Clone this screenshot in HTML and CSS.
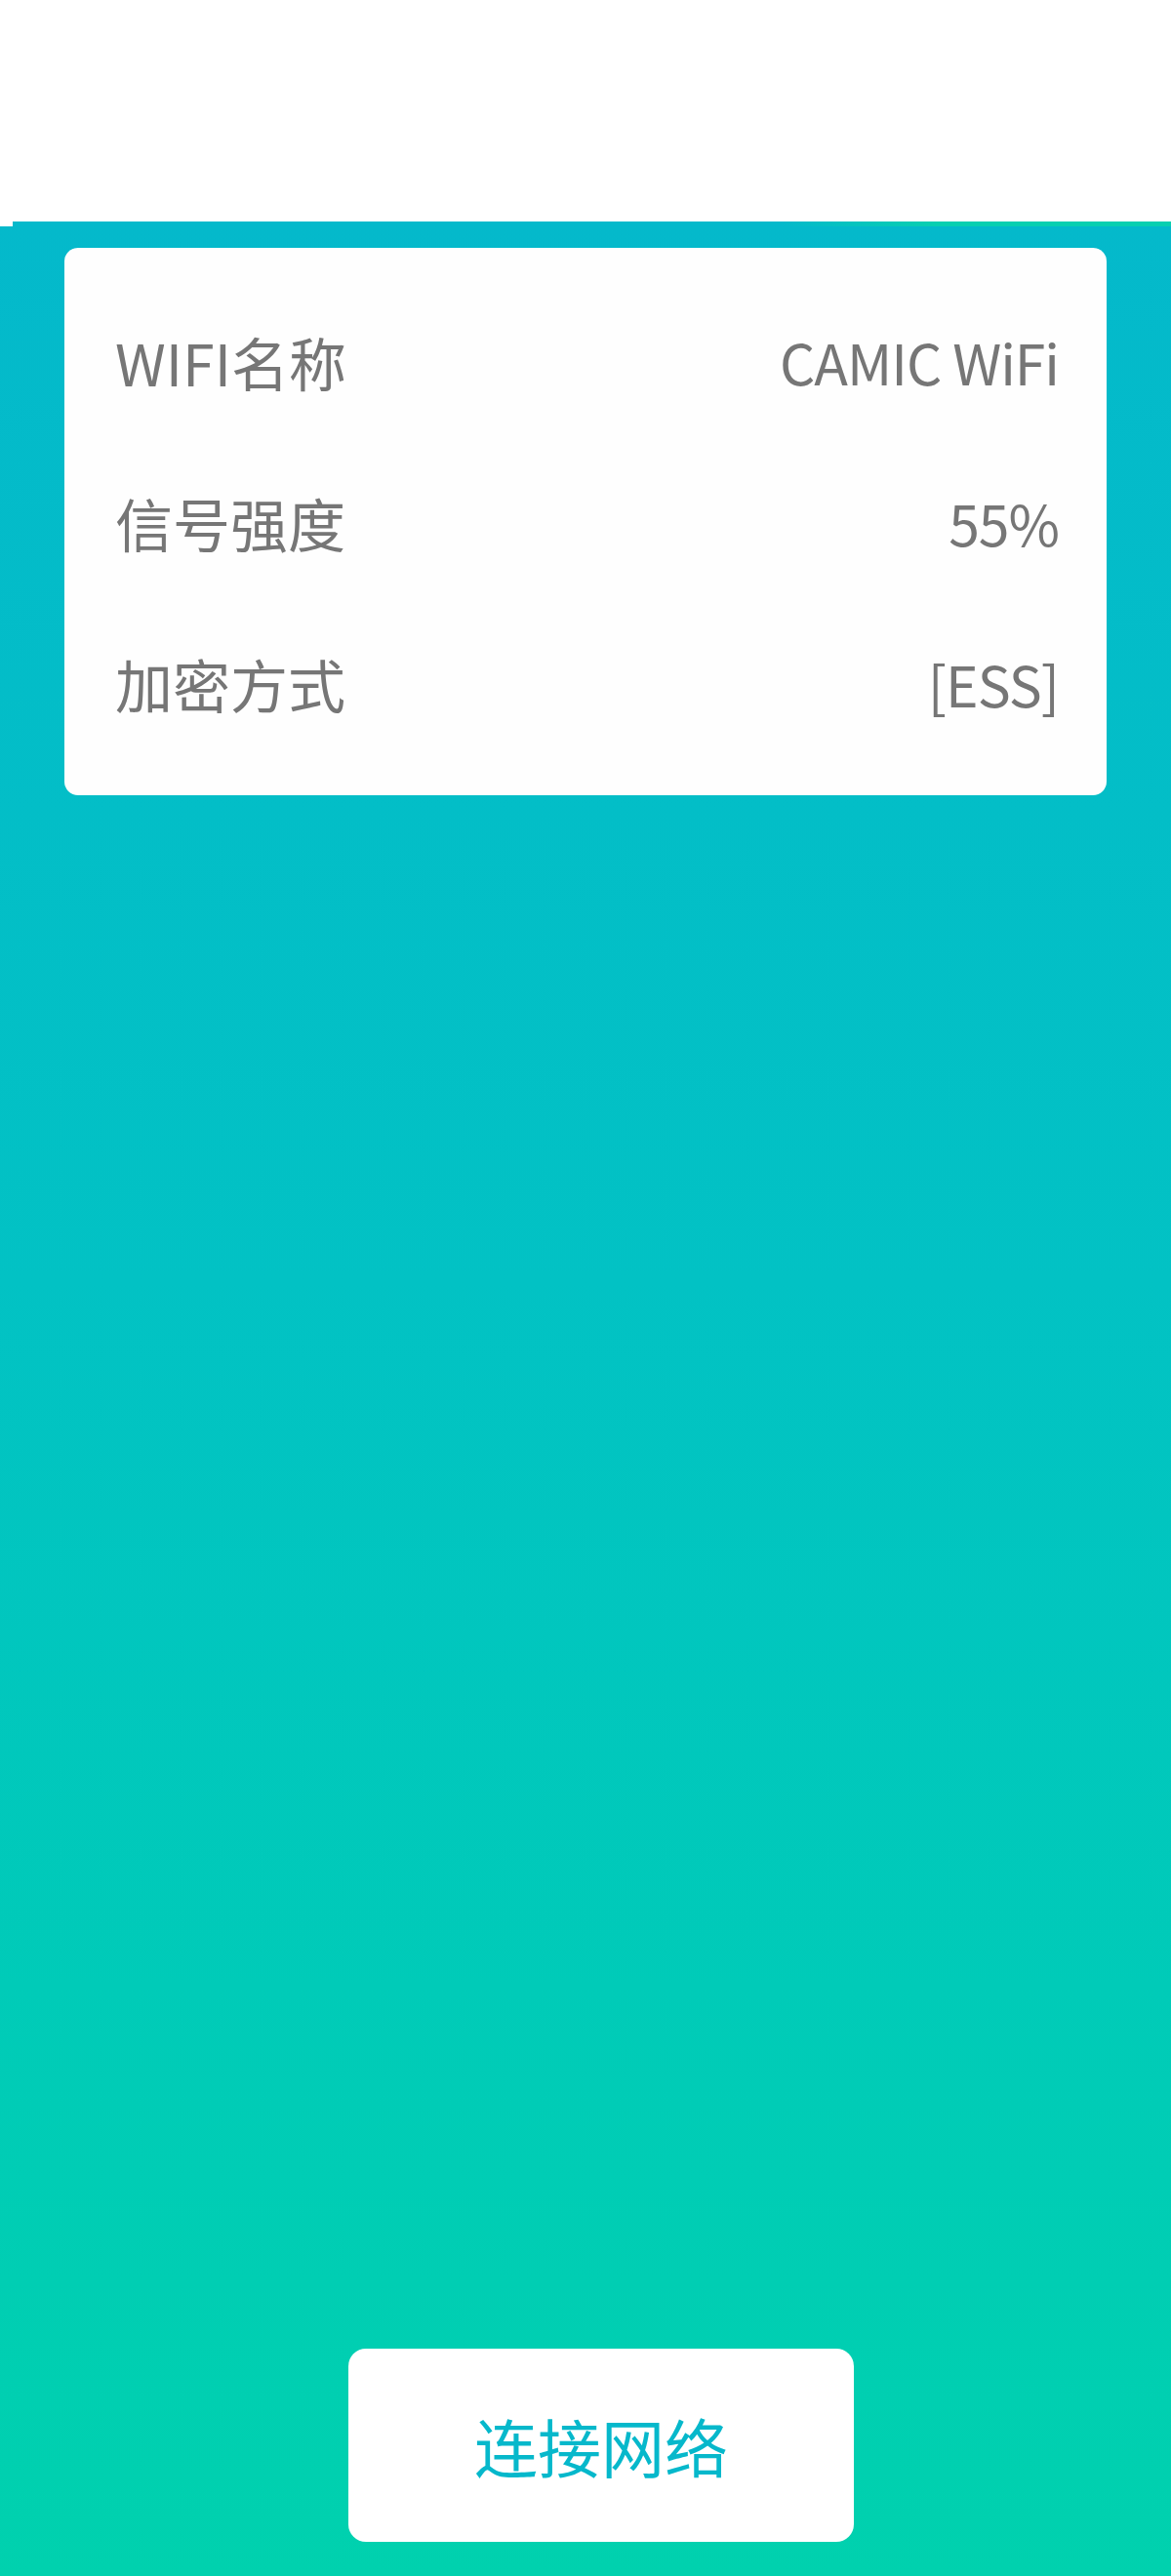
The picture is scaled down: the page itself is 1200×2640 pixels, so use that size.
FILE: index.html
```html
<!DOCTYPE html>
<html lang="zh-CN">
<head>
<meta charset="utf-8">
<title>WIFI</title>
<link rel="stylesheet" href="styles.css">
</head>
<body>
<header class="topbar"></header>
<main class="screen">
  <section class="card">
    <div class="row"><span class="label">WIFI名称</span><span class="value">CAMIC WiFi</span></div>
    <div class="row"><span class="label">信号强度</span><span class="value">55%</span></div>
    <div class="row"><span class="label">加密方式</span><span class="value">[ESS]</span></div>
  </section>
  <button class="connect">连接网络</button>
</main>
</body>
</html>
```

FILE: styles.css
```css
html, body {
  margin: 0;
  padding: 0;
}
body {
  width: 1200px;
  height: 2640px;
  background: #ffffff;
  font-family: "Noto Sans CJK SC", "Noto Sans", sans-serif;
  overflow: hidden;
}
.topbar {
  height: 227px;
  background: #ffffff;
}
.screen {
  position: relative;
  height: 2413px;
  box-sizing: border-box;
  padding: 27px 0 35px;
  display: flex;
  flex-direction: column;
  background: linear-gradient(180deg, #04b9cb 0%, #02c2c4 45%, #00cbb8 75%, #00d1ae 100%);
}
.screen::before {
  content: "";
  position: absolute;
  left: 0;
  top: 0;
  width: 13px;
  height: 5px;
  background: #ffffff;
}
.screen::after {
  content: "";
  position: absolute;
  right: 0;
  top: 0;
  width: 400px;
  height: 5px;
  background: linear-gradient(90deg, rgba(8, 206, 178, 0) 0%, #08cfb0 40%, #08cfb0 100%);
}
.card {
  margin: 0 66px 0 66px;
  height: 561px;
  box-sizing: border-box;
  padding: 34px 49px 31px 52px;
  background: #fefefe;
  border-radius: 14px;
  display: flex;
  flex-direction: column;
}
.row {
  height: 165px;
  display: flex;
  align-items: center;
  justify-content: space-between;
  color: #767676;
  line-height: 1;
}
.label {
  font-size: 59px;
}
.value {
  font-size: 57px;
  letter-spacing: -1px;
}
.connect {
  margin-top: auto;
  margin-left: 357px;
  width: 518px;
  height: 198px;
  border: none;
  border-radius: 18px;
  background: #ffffff;
  color: #06b8cb;
  font-family: "Noto Sans CJK SC", "Noto Sans", sans-serif;
  font-size: 65px;
  padding: 0;
  cursor: pointer;
}
```
